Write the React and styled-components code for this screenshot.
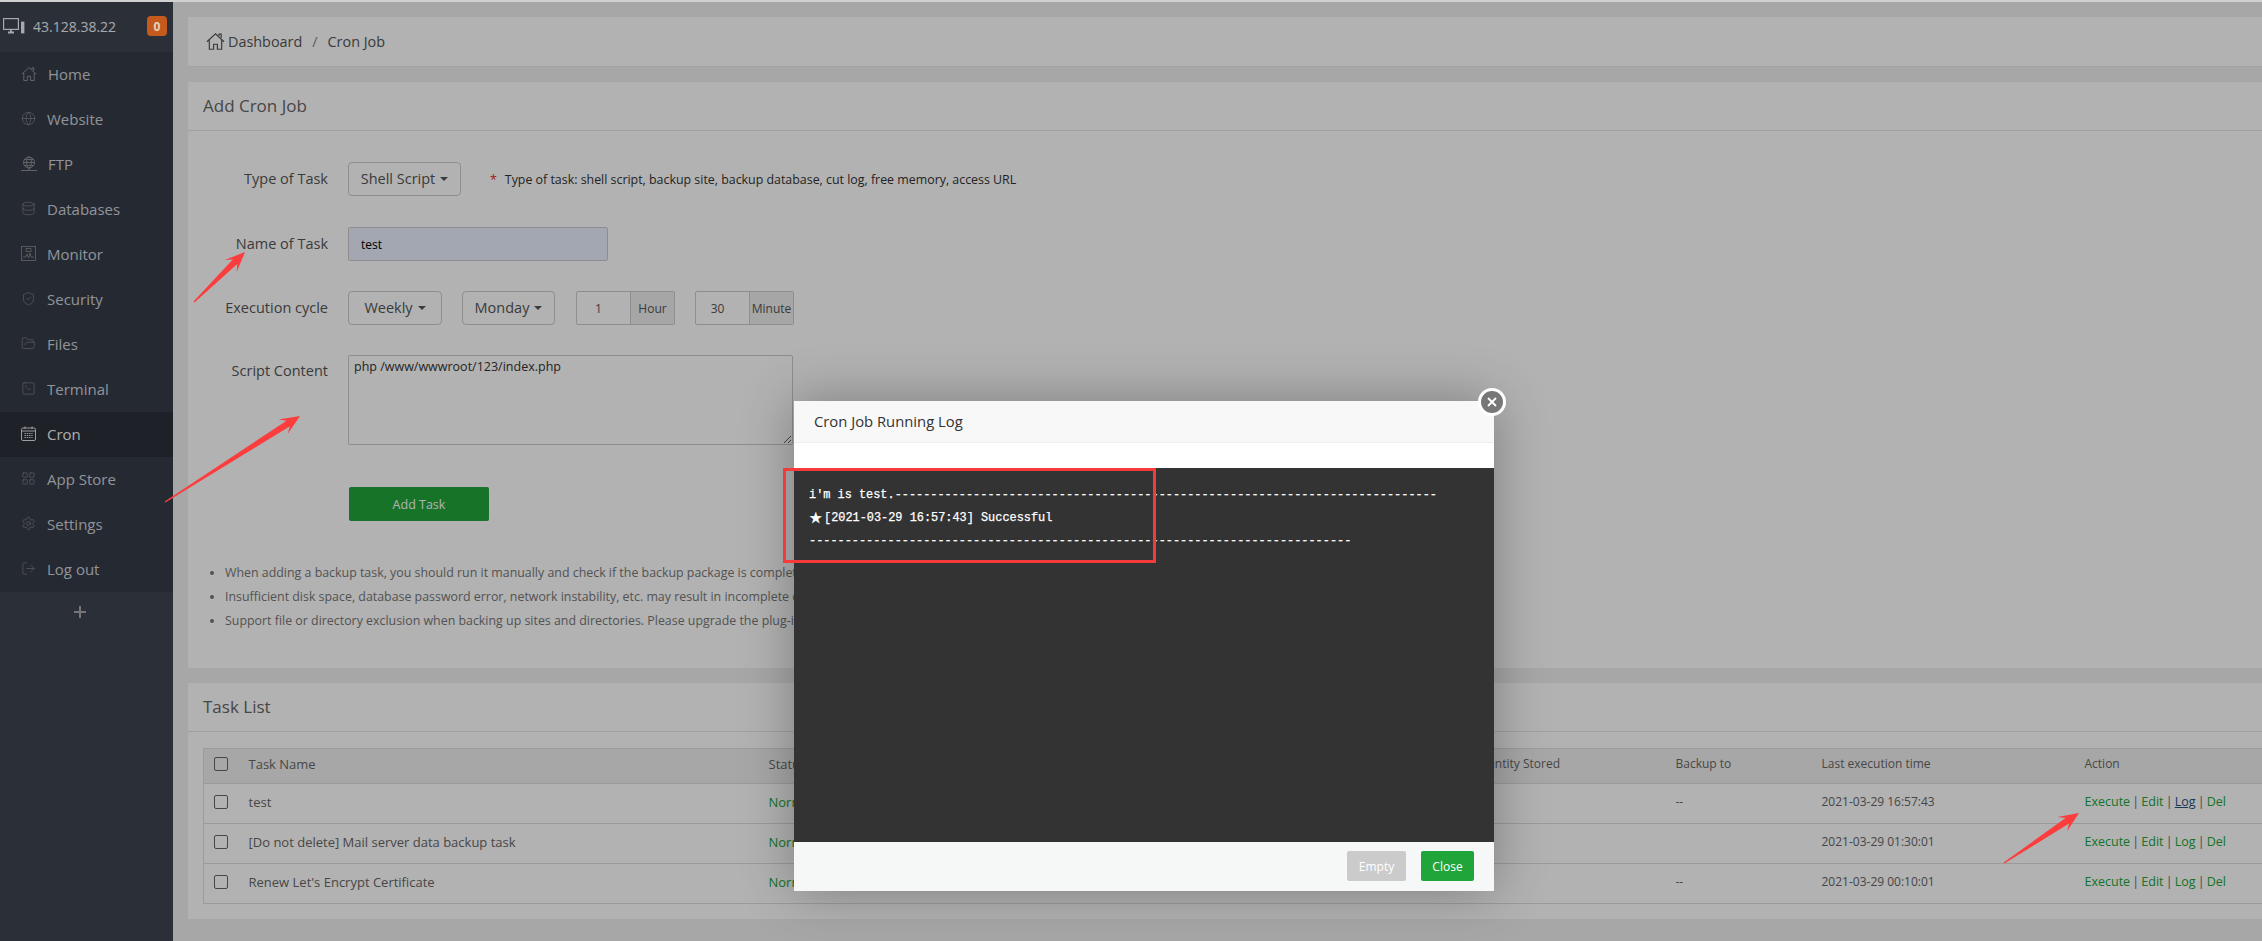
import React from "react";
import styled, { createGlobalStyle } from "styled-components";
import {
  Globe,
  Database,
  ShieldCheck,
  FolderOpen,
  SquareTerminal,
  LayoutGrid,
  Settings,
  LogOut,
} from "lucide-react";

const GlobalStyle = createGlobalStyle`
  html, body {
    margin: 0;
    padding: 0;
    width: 2262px;
    height: 941px;
    overflow: hidden;
    background: #d0d0d0;
    font-family: "Open Sans", "Liberation Sans", sans-serif;
  }
  * { box-sizing: border-box; }
`;

const Page = styled.div`
  position: relative;
  width: 2262px;
  height: 941px;
  padding-top: 2px;
  display: flex;
  overflow: hidden;
`;

const Sidebar = styled.aside`
  width: 173px;
  flex-shrink: 0;
  background: #3e4450;
  display: flex;
  flex-direction: column;
`;

const SideHead = styled.div`
  height: 50px;
  display: flex;
  align-items: center;
  padding: 0 6px 2px 3px;
  color: #eef1f6;
  font-size: 14px;
`;

const ServerIp = styled.span`
  margin-left: 8px;
  flex: 1;
`;

const Badge = styled.span`
  position: relative;
  z-index: 3;
  width: 20px;
  height: 20px;
  border-radius: 4px;
  background: #c45a1c;
  color: #e6d2bc;
  font-size: 12px;
  font-weight: 700;
  display: flex;
  align-items: center;
  justify-content: center;
`;

const Nav = styled.nav`
  background: #363c48;
`;

const NavItem = styled.div`
  height: 45px;
  display: flex;
  align-items: center;
  gap: 11px;
  padding: 0 0 2px 21px;
  font-size: 15px;
  color: ${(p) => (p.$active ? "#f4f6f8" : "#ced3db")};
  background: ${(p) => (p.$active ? "#2c3038" : "transparent")};
  svg {
    color: ${(p) => (p.$active ? "#e2e2e2" : "#8d8f93")};
    flex-shrink: 0;
  }
`;

const AddMenu = styled.div`
  height: 42px;
  display: flex;
  align-items: center;
  justify-content: center;
  padding: 0 13px 2px 0;
  svg {
    color: #a8a8a8;
  }
`;

const Main = styled.main`
  flex: 1;
  background: #f0f0f0;
  padding: 15px 0 0 15px;
  display: flex;
  flex-direction: column;
  gap: 15px;
`;

const Crumbs = styled.div`
  height: 50px;
  background: #fff;
  border-bottom: 1px solid #e8e8e8;
  display: flex;
  align-items: center;
  padding: 0 0 1px 18px;
  font-size: 14.4px;
  color: #555;
`;

const CrumbLabel = styled.span`
  margin-left: 3px;
`;

const CrumbSep = styled.span`
  margin: 0 10px;
  color: #888;
`;

const Card = styled.section`
  background: #fff;
  height: ${(p) => p.$height}px;
  display: flex;
  flex-direction: column;
`;

const CardTitle = styled.h2`
  margin: 0;
  height: 49px;
  flex-shrink: 0;
  padding: 0 0 1px 15px;
  display: flex;
  align-items: center;
  font-size: 17px;
  font-weight: 400;
  color: #666;
  border-bottom: 1px solid #e6e6e6;
`;

const Form = styled.div`
  padding-top: 31px;
`;

const FormRow = styled.div`
  display: flex;
  align-items: ${(p) => (p.$top ? "flex-start" : "center")};
  margin-bottom: ${(p) => (p.$top ? 0 : 30)}px;
  &:first-child {
    margin-bottom: 31px;
  }
`;

const Label = styled.label`
  width: 140px;
  margin-right: 20px;
  padding-bottom: ${(p) => (p.$top ? "0" : "2px")};
  padding-top: ${(p) => (p.$top ? "6px" : "0")};
  text-align: right;
  font-size: 14.5px;
  color: #555;
`;

const Dropdown = styled.div`
  width: ${(p) => p.$width}px;
  height: 34px;
  margin-right: ${(p) => p.$gap || 0}px;
  padding-bottom: 1px;
  border: 1px solid #ccc;
  border-radius: 4px;
  display: flex;
  align-items: center;
  justify-content: center;
  gap: 5px;
  font-size: 14.5px;
  color: #555;
  &::after {
    content: "";
    border-top: 4px solid #555;
    border-left: 4px solid transparent;
    border-right: 4px solid transparent;
  }
`;

const Hint = styled.span`
  margin-left: 29px;
  font-size: 12.4px;
  color: #333;
  &::before {
    content: "*";
    color: #e03030;
    margin-right: 8px;
  }
`;

const TextInput = styled.input`
  width: 260px;
  height: 34px;
  border: 1px solid #ccc;
  border-radius: 2px;
  background: #e8f0fe;
  padding: 0 12px;
  font: 12px "Open Sans", sans-serif;
  color: #000;
  outline: none;
`;

const UnitGroup = styled.div`
  width: 99px;
  height: 34px;
  margin-right: 20px;
  border: 1px solid #ccc;
  border-radius: 2px;
  display: flex;
`;

const UnitInput = styled.input`
  width: 53px;
  border: 0;
  background: transparent;
  padding: 0 10px 0 0;
  text-align: center;
  font: 12px "Open Sans", sans-serif;
  color: #555;
  outline: none;
`;

const UnitLabel = styled.span`
  flex: 1;
  background: #eee;
  border-left: 1px solid #ccc;
  display: flex;
  align-items: center;
  justify-content: center;
  font-size: 12px;
  color: #555;
`;

const ScriptArea = styled.textarea`
  width: 445px;
  height: 90px;
  border: 1px solid #ccc;
  border-radius: 2px;
  background: transparent;
  padding: 2px 5px;
  font: 12.5px/17px "Open Sans", sans-serif;
  color: #333;
  outline: none;
`;

const SubmitRow = styled.div`
  padding-left: 161px;
  margin-top: 42px;
`;

const SubmitButton = styled.button`
  width: 140px;
  height: 34px;
  border: 0;
  border-radius: 2px;
  background: #20a53a;
  color: #fff;
  font: 12.5px "Open Sans", sans-serif;
`;

const Notes = styled.ul`
  margin: 40px 0 0;
  padding-left: 37px;
  font-size: 12.4px;
  line-height: 24px;
  color: #777;
  white-space: nowrap;
`;

const TableWrap = styled.div`
  padding: 16px 0 0 15px;
`;

const Table = styled.table`
  width: 2059px;
  table-layout: fixed;
  border-collapse: collapse;
  border: 1px solid #ddd;
  font-size: 12px;
  color: #666;
  th {
    height: 35px;
    background: #f0f0f0;
    font-weight: 400;
    text-align: left;
    padding: 0 10px 5px;
    border-bottom: 1px solid #ddd;
  }
  td {
    height: 40px;
    padding: 0 10px 4px;
    border-bottom: 1px solid #ddd;
  }
  th:nth-child(2),
  td:nth-child(2),
  th:nth-child(3),
  td:nth-child(3) {
    font-size: 13px;
  }
  td:last-child {
    font-size: 12.5px;
    word-spacing: -1.1px;
  }
`;

const Check = styled.input.attrs({ type: "checkbox", readOnly: true })`
  appearance: none;
  display: block;
  margin: 0;
  width: 14px;
  height: 14px;
  border: 1px solid #666;
  border-radius: 2px;
`;

const Normal = styled.span`
  color: #20a53a;
`;

const ActionLink = styled.a`
  color: ${(p) => (p.$hover ? "#23527c" : "#20a53a")};
  text-decoration: ${(p) => (p.$hover ? "underline" : "none")};
`;

const Dim = styled.div`
  position: absolute;
  inset: 2px 0 0 0;
  background: rgba(0, 0, 0, 0.3);
`;

const Modal = styled.div`
  position: absolute;
  left: 794px;
  top: 401px;
  width: 700px;
  height: 490px;
  background: #fff;
  box-shadow: 0 0 50px rgba(0, 0, 0, 0.3);
  display: flex;
  flex-direction: column;
`;

const ModalTitle = styled.div`
  height: 42px;
  background: #f8f8f8;
  border-bottom: 1px solid #eee;
  padding: 0 0 2px 20px;
  display: flex;
  align-items: center;
  font-size: 14.8px;
  color: #333;
`;

const ModalClose = styled.button`
  position: absolute;
  right: -12px;
  top: -13px;
  width: 28px;
  height: 28px;
  padding: 0;
  border: 3px solid #fff;
  border-radius: 50%;
  background: #777;
  color: #fff;
  display: flex;
  align-items: center;
  justify-content: center;
`;

const LogBody = styled.div`
  margin: 25px 0 0;
  height: 374px;
  background: #333;
  color: #fff;
  padding: 16px 15px 0;
  font: 11.9px/23px "Liberation Mono", monospace;
  -webkit-text-stroke: 0.25px #fff;
  white-space: pre;
`;

const LogLine = styled.div`
  height: 23px;
  display: flex;
  align-items: center;
`;

const Star = styled.span`
  width: 15px;
  flex-shrink: 0;
  font: 15px/1 "DejaVu Sans", sans-serif;
`;

const ModalFoot = styled.div`
  flex: 1;
  background: #f6f8f8;
  display: flex;
  justify-content: flex-end;
  align-items: flex-start;
  gap: 15px;
  padding: 9px 20px 0 0;
`;

const FootButton = styled.button`
  width: ${(p) => p.$width}px;
  height: 30px;
  border: 0;
  border-radius: 2px;
  background: ${(p) => (p.$muted ? "#cbcbcb" : "#20a53a")};
  color: #fff;
  font: 12px "Open Sans", sans-serif;
`;

const RedBox = styled.div`
  position: absolute;
  left: 783px;
  top: 468px;
  width: 373px;
  height: 95px;
  border: 3px solid #f43a3a;
`;

const ArrowLayer = styled.svg`
  position: absolute;
  left: 0;
  top: 0;
  pointer-events: none;
`;

function HouseIcon({ size = 16 }) {
  return (
    <svg width={size} height={size} viewBox="0 0 16 16" fill="none" stroke="currentColor" strokeWidth="1">
      <path d="M.8 8.2 8 1.5l7.2 6.7M2.8 7v7.5h3.6v-4.2h3.2v4.2h3.6V7M11 3.2V1.8h1.8v3" />
    </svg>
  );
}

function FtpIcon() {
  return (
    <svg width="16" height="16" viewBox="0 0 16 16" fill="none" stroke="currentColor" strokeWidth="1">
      <circle cx="8" cy="6.5" r="5.5" />
      <ellipse cx="8" cy="6.5" rx="2.4" ry="5.5" />
      <path d="M2.5 6.5h11M3.4 3.6h9.2M3.4 9.4h9.2M8 12v2M0 14.5h16" />
    </svg>
  );
}

function MonitorIcon() {
  return (
    <svg width="15" height="15" viewBox="0 0 15 15" fill="none" stroke="currentColor" strokeWidth=".8">
      <rect x=".5" y=".5" width="14" height="14" />
      <path d="M2 11h2.5l1.5-3 1.5 4 1.5-5 1 4H13M5 2.5h5v3H5z" />
    </svg>
  );
}

function CalendarIcon() {
  return (
    <svg width="15" height="15" viewBox="0 0 15 15" fill="none" stroke="currentColor" strokeWidth="1">
      <rect x=".5" y="2" width="14" height="12.5" rx="1.5" />
      <path d="M4 .5V3M11 .5V3M.5 5h14" />
      <path d="M3.5 7.5h8M3.5 9.5h8M3.5 11.5h8" strokeDasharray="1.4 .9" />
    </svg>
  );
}

function ServerIcon() {
  return (
    <svg width="22" height="16" viewBox="0 0 22 16" fill="none" stroke="currentColor" strokeWidth="1.2">
      <rect x=".6" y=".6" width="14.8" height="10.8" />
      <path d="M5 14.5h6M8 11.5v3" strokeWidth="1.8" />
      <rect x="18" y="3.6" width="3.4" height="11.8" fill="currentColor" stroke="none" />
    </svg>
  );
}

function Arrow({ from, to }) {
  const dx = to[0] - from[0];
  const dy = to[1] - from[1];
  const len = Math.hypot(dx, dy);
  const at = (along, side) => [
    from[0] + (dx / len) * along - (dy / len) * side,
    from[1] + (dy / len) * along + (dx / len) * side,
  ];
  const pts = [
    at(0, 0.7),
    at(len - 14, 3.2),
    at(len - 20, 8.5),
    at(len, 0),
    at(len - 20, -8.5),
    at(len - 14, -3.2),
    at(0, -0.7),
  ];
  return <polygon points={pts.map((p) => p.join(",")).join(" ")} fill="#fc3d3d" />;
}

const menu = [
  ["Home", <HouseIcon />],
  ["Website", <Globe size={15} strokeWidth={1} />],
  ["FTP", <FtpIcon />],
  ["Databases", <Database size={15} strokeWidth={1} />],
  ["Monitor", <MonitorIcon />],
  ["Security", <ShieldCheck size={15} strokeWidth={1} />],
  ["Files", <FolderOpen size={15} strokeWidth={1} />],
  ["Terminal", <SquareTerminal size={15} strokeWidth={1} />],
  ["Cron", <CalendarIcon />, true],
  ["App Store", <LayoutGrid size={15} strokeWidth={1} />],
  ["Settings", <Settings size={15} strokeWidth={1} />],
  ["Log out", <LogOut size={15} strokeWidth={1} />],
];

const tasks = [
  { name: "test", backup: "--", time: "2021-03-29 16:57:43", hover: true },
  { name: "[Do not delete] Mail server data backup task", backup: "", time: "2021-03-29 01:30:01" },
  { name: "Renew Let's Encrypt Certificate", backup: "--", time: "2021-03-29 00:10:01" },
];

const dashes = "-".repeat(76);

export default function App() {
  return (
    <Page>
      <GlobalStyle />
      <Sidebar>
        <SideHead>
          <ServerIcon />
          <ServerIp>43.128.38.22</ServerIp>
          <Badge>0</Badge>
        </SideHead>
        <Nav>
          {menu.map(([label, icon, active]) => (
            <NavItem key={label} $active={active}>
              {icon}
              {label}
            </NavItem>
          ))}
        </Nav>
        <AddMenu>
          <svg width="14" height="14" viewBox="0 0 14 14" stroke="currentColor" strokeWidth="2">
            <path d="M7 1v12M1 7h12" />
          </svg>
        </AddMenu>
      </Sidebar>

      <Main>
        <Crumbs>
          <HouseIcon size={19} />
          <CrumbLabel>Dashboard</CrumbLabel>
          <CrumbSep>/</CrumbSep>
          <span>Cron Job</span>
        </Crumbs>

        <Card $height={586}>
          <CardTitle>Add Cron Job</CardTitle>
          <Form>
            <FormRow>
              <Label>Type of Task</Label>
              <Dropdown $width={113}>Shell Script</Dropdown>
              <Hint>Type of task: shell script, backup site, backup database, cut log, free memory, access URL</Hint>
            </FormRow>
            <FormRow>
              <Label>Name of Task</Label>
              <TextInput readOnly value="test" />
            </FormRow>
            <FormRow>
              <Label>Execution cycle</Label>
              <Dropdown $width={94} $gap={20}>Weekly</Dropdown>
              <Dropdown $width={93} $gap={21}>Monday</Dropdown>
              <UnitGroup>
                <UnitInput readOnly value="1" />
                <UnitLabel>Hour</UnitLabel>
              </UnitGroup>
              <UnitGroup>
                <UnitInput readOnly value="30" />
                <UnitLabel>Minute</UnitLabel>
              </UnitGroup>
            </FormRow>
            <FormRow $top>
              <Label $top>Script Content</Label>
              <ScriptArea readOnly value="php /www/wwwroot/123/index.php" />
            </FormRow>
            <SubmitRow>
              <SubmitButton>Add Task</SubmitButton>
            </SubmitRow>
          </Form>
          <Notes>
            <li>When adding a backup task, you should run it manually and check if the backup package is complete.</li>
            <li>Insufficient disk space, database password error, network instability, etc. may result in incomplete data backup.</li>
            <li>Support file or directory exclusion when backing up sites and directories. Please upgrade the plug-in.</li>
          </Notes>
        </Card>

        <Card $height={236}>
          <CardTitle>Task List</CardTitle>
          <TableWrap>
            <Table>
              <colgroup>
                <col width="35" />
                <col width="520" />
                <col width="242" />
                <col width="461" />
                <col width="204" />
                <col width="146" />
                <col width="263" />
                <col width="188" />
              </colgroup>
              <thead>
                <tr>
                  <th><Check /></th>
                  <th>Task Name</th>
                  <th>Status</th>
                  <th>Period</th>
                  <th>Quantity Stored</th>
                  <th>Backup to</th>
                  <th>Last execution time</th>
                  <th>Action</th>
                </tr>
              </thead>
              <tbody>
                {tasks.map((t) => (
                  <tr key={t.name}>
                    <td><Check /></td>
                    <td>{t.name}</td>
                    <td><Normal>Normal</Normal></td>
                    <td />
                    <td />
                    <td>{t.backup}</td>
                    <td>{t.time}</td>
                    <td>
                      <ActionLink>Execute</ActionLink> | <ActionLink>Edit</ActionLink> |{" "}
                      <ActionLink $hover={t.hover}>Log</ActionLink> | <ActionLink>Del</ActionLink>
                    </td>
                  </tr>
                ))}
              </tbody>
            </Table>
          </TableWrap>
        </Card>
      </Main>

      <Dim />

      <Modal>
        <ModalTitle>Cron Job Running Log</ModalTitle>
        <ModalClose>
          <svg width="12" height="12" viewBox="0 0 12 12" stroke="currentColor" strokeWidth="1.8">
            <path d="M2 2l8 8M10 2l-8 8" />
          </svg>
        </ModalClose>
        <LogBody>
          <LogLine>{`i'm is test.${dashes}`}</LogLine>
          <LogLine>
            <Star>★</Star>
            <span>[2021-03-29 16:57:43] Successful</span>
          </LogLine>
          <LogLine>{dashes}</LogLine>
        </LogBody>
        <ModalFoot>
          <FootButton $muted $width={59}>Empty</FootButton>
          <FootButton $width={53}>Close</FootButton>
        </ModalFoot>
      </Modal>

      <RedBox />
      <ArrowLayer width="2262" height="941">
        <Arrow from={[194, 302]} to={[245, 252]} />
        <Arrow from={[165, 502]} to={[300, 416]} />
        <Arrow from={[2004, 863]} to={[2079, 813]} />
      </ArrowLayer>
    </Page>
  );
}
